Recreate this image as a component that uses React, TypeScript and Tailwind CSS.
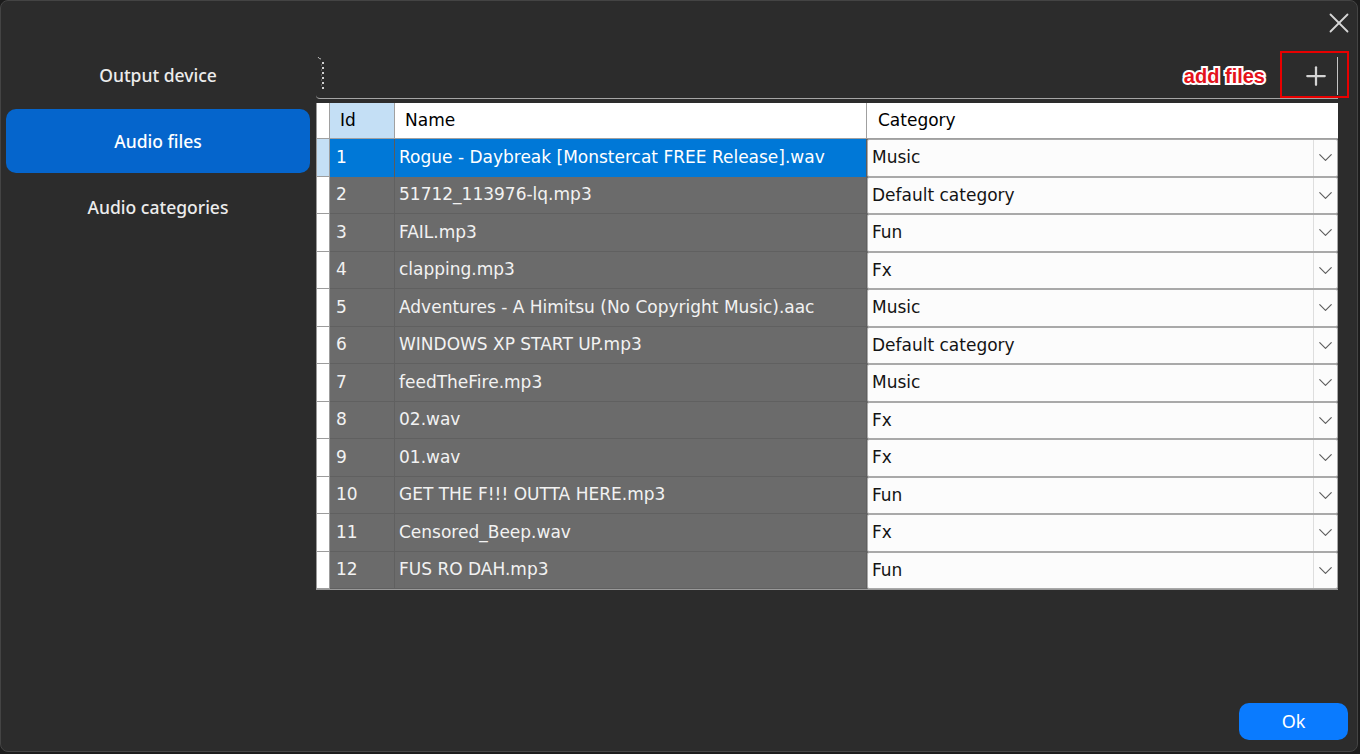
import { Plus, X, ChevronDown } from 'lucide-react';

const files = [
  { id: 1, name: 'Rogue - Daybreak [Monstercat FREE Release].wav', cat: 'Music' },
  { id: 2, name: '51712_113976-lq.mp3', cat: 'Default category' },
  { id: 3, name: 'FAIL.mp3', cat: 'Fun' },
  { id: 4, name: 'clapping.mp3', cat: 'Fx' },
  { id: 5, name: 'Adventures - A Himitsu (No Copyright Music).aac', cat: 'Music' },
  { id: 6, name: 'WINDOWS XP START UP.mp3', cat: 'Default category' },
  { id: 7, name: 'feedTheFire.mp3', cat: 'Music' },
  { id: 8, name: '02.wav', cat: 'Fx' },
  { id: 9, name: '01.wav', cat: 'Fx' },
  { id: 10, name: 'GET THE F!!! OUTTA HERE.mp3', cat: 'Fun' },
  { id: 11, name: 'Censored_Beep.wav', cat: 'Fx' },
  { id: 12, name: 'FUS RO DAH.mp3', cat: 'Fun' },
];

const navItems = ['Output device', 'Audio files', 'Audio categories'];

function Grip() {
  return (
    <svg width="10" height="40" viewBox="0 0 10 40" className="ml-[1px]">
      <path d="M1 1 q1 2 3 2" stroke="#bdbdbd" strokeWidth="1" fill="none" />
      {[6, 11, 16, 21, 26, 31].map((y) => (
        <rect key={y} x="5" y={y} width="2" height="2" fill="#d0d0d0" />
      ))}
      {[8.5, 13.5, 18.5, 23.5, 28.5].map((y) => (
        <rect key={y} x="4" y={y} width="1" height="1" fill="#8a8a8a" />
      ))}
    </svg>
  );
}

function CategoryCombo({ value }: { value: string }) {
  return (
    <div className="flex h-full w-full rounded-[2px] border border-[#a9a9a9] bg-[#fcfcfc]">
      <span className="flex flex-1 items-center pl-[4px] text-[#141414]">{value}</span>
      <span className="flex w-[24px] items-center justify-center border-l border-[#dedede]">
        <ChevronDown size={23} strokeWidth={1.2} className="text-[#5e5e5e]" />
      </span>
    </div>
  );
}

export default function App() {
  return (
    <div className="h-[754px] w-[1360px] bg-[#1c1c1c] font-['Noto_Sans',sans-serif]">
      <div className="flex h-[752px] w-[1358px] flex-col rounded-[8px] border border-[#444] bg-[#2c2c2c]">
        <div className="flex h-[42px] items-start justify-end pr-[1px] pt-[5px]">
          <X size={34} strokeWidth={1.3} className="text-[#d6d6d6]" />
        </div>

        <div className="flex flex-1">
          <nav className="flex w-[309px] flex-col gap-[2px] pl-[5px]">
            {navItems.map((item) => (
              <div
                key={item}
                className={
                  item === 'Audio files'
                    ? 'flex h-[64px] w-[304px] items-center justify-center rounded-[10px] bg-[#0565cc] text-[17.5px] font-medium text-white'
                    : 'flex h-[64px] w-[304px] items-center justify-center text-[17.5px] font-medium text-[#ececec]'
                }
              >
                {item}
              </div>
            ))}
          </nav>

          <main className="ml-[6px] flex w-[1022px] flex-col pt-[10px]">
            <div className="relative flex h-[46px] items-center rounded-bl-[4px] border-b border-[#a5a5a5]">
              <Grip />
              <div className="flex-1" />
              <span className="font-['Liberation_Sans',sans-serif] text-[20px] font-bold text-[#e3121b] [-webkit-text-stroke:4px_white] [paint-order:stroke_fill]">
                add files
              </span>
              <button className="ml-[33px] flex h-[36px] w-[36px] items-center justify-center">
                <Plus size={30} strokeWidth={1.8} className="text-[#d4d4d4]" />
              </button>
              <div className="ml-[3px] h-[38px] w-px bg-[#c4c4c4]" />
              <div className="absolute right-[-11px] top-[-2px] h-[47px] w-[69px] border-2 border-[#e80000]" />
            </div>

            <div className="mt-[4px] w-[1022px] border-b border-l border-[#9a9a9a] font-['DejaVu_Sans',sans-serif] text-[17px]">
              <div className="flex h-[36px]">
                <div className="w-[13px] border-b border-r border-[#a0a0a0] bg-white" />
                <div className="flex w-[65px] items-center border-b border-r border-[#a0a0a0] bg-[#c4dff5] pl-[10px] text-black">Id</div>
                <div className="flex w-[472px] items-center border-b border-r border-[#a0a0a0] bg-white pl-[10px] text-black">Name</div>
                <div className="flex flex-1 items-center border-b border-[#a0a0a0] bg-white pl-[11px] text-black">Category</div>
              </div>
              {files.map((f) => {
                const sel = f.id === 1;
                return (
                  <div key={f.id} className="flex h-[37.5px]">
                    <div
                      className={
                        sel
                          ? 'w-[13px] border-b border-r border-[#9c9c9c] bg-[#c4dff5]'
                          : 'w-[13px] border-b border-r border-[#9c9c9c] bg-white'
                      }
                    />
                    <div
                      className={
                        sel
                          ? 'flex w-[65px] items-center border-r border-[#5c5c5c] bg-[#0078d7] pl-[6px] text-white'
                          : 'flex w-[65px] items-center border-b border-r border-[#606060] bg-[#6b6b6b] pl-[6px] text-[#f2f2f2]'
                      }
                    >
                      {f.id}
                    </div>
                    <div
                      className={
                        sel
                          ? 'flex w-[472px] items-center border-r border-[#5c5c5c] bg-[#0078d7] pl-[4px] text-white'
                          : 'flex w-[472px] items-center border-b border-r border-[#606060] bg-[#6b6b6b] pl-[4px] text-[#f2f2f2]'
                      }
                    >
                      {f.name}
                    </div>
                    <div className="flex-1 bg-[#6b6b6b]">
                      <CategoryCombo value={f.cat} />
                    </div>
                  </div>
                );
              })}
            </div>
          </main>
        </div>

        <div className="flex justify-end pb-[11px] pr-[9px]">
          <button className="h-[37px] w-[109px] rounded-[10px] bg-[#0a7bff] text-[18px] text-white">Ok</button>
        </div>
      </div>
    </div>
  );
}
